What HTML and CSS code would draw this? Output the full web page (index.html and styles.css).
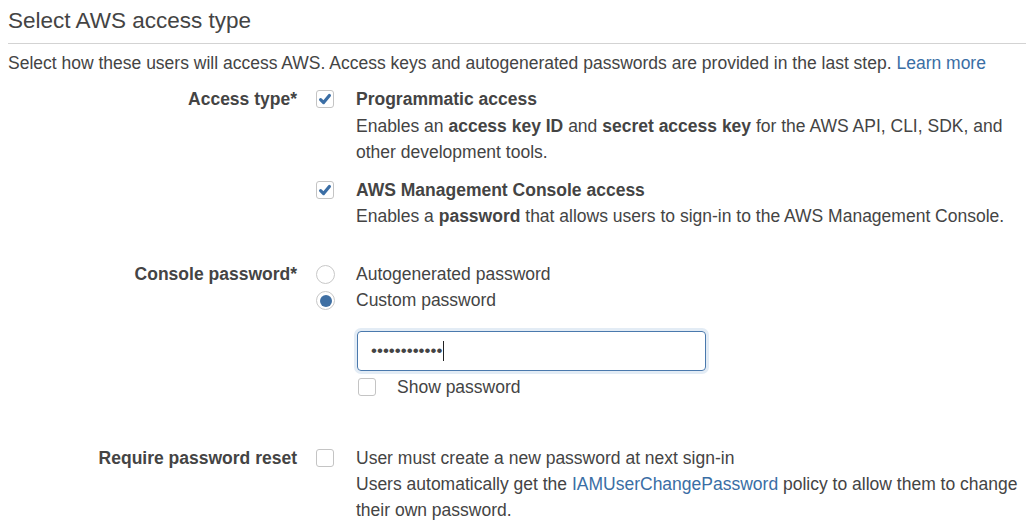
FILE: index.html
```html
<!DOCTYPE html>
<html>
<head>
<meta charset="utf-8">
<link rel="stylesheet" href="styles.css">
</head>
<body>
<div class="page">
  <h2 class="title">Select AWS access type</h2>
  <p class="desc">Select how these users will access AWS. Access keys and autogenerated passwords are provided in the last step. <a class="link" href="#">Learn more</a></p>

  <div class="row row-access">
    <div class="label">Access type*</div>
    <div class="options">
      <div class="option">
        <span class="box checked"><svg viewBox="0 0 18 18" width="18" height="18"><path d="M4.6 9.6 L7.6 12.6 L13.4 5.4" fill="none" stroke="#3b6ea5" stroke-width="3.2" stroke-linecap="round" stroke-linejoin="round"/></svg></span>
        <div class="text">
          <div class="strong">Programmatic access</div>
          <div class="lh">Enables an <b>access key ID</b> and <b>secret access key</b> for the AWS API, CLI, SDK, and<br>other development tools.</div>
        </div>
      </div>
      <div class="option option-2">
        <span class="box checked"><svg viewBox="0 0 18 18" width="18" height="18"><path d="M4.6 9.6 L7.6 12.6 L13.4 5.4" fill="none" stroke="#3b6ea5" stroke-width="3.2" stroke-linecap="round" stroke-linejoin="round"/></svg></span>
        <div class="text">
          <div class="strong">AWS Management Console access</div>
          <div>Enables a <b>password</b> that allows users to sign-in to the AWS Management Console.</div>
        </div>
      </div>
    </div>
  </div>

  <div class="row row-password">
    <div class="label">Console password*</div>
    <div class="options">
      <div class="option">
        <span class="radio"></span>
        <div class="text">Autogenerated password</div>
      </div>
      <div class="option">
        <span class="radio selected"></span>
        <div class="text">Custom password</div>
      </div>
      <div class="input-wrap">
        <div class="input"><span class="dots">••••••••••••</span><span class="caret"></span></div>
      </div>
      <div class="option show">
        <span class="box"></span>
        <div class="text">Show password</div>
      </div>
    </div>
  </div>

  <div class="row row-reset">
    <div class="label">Require password reset</div>
    <div class="options">
      <div class="option">
        <span class="box"></span>
        <div class="text">User must create a new password at next sign-in<br>Users automatically get the <a class="link" href="#">IAMUserChangePassword</a> policy to allow them to change<br>their own password.</div>
      </div>
    </div>
  </div>
</div>
</body>
</html>
```

FILE: styles.css
```css
html, body {
  margin: 0;
  padding: 0;
  background: #ffffff;
}

.page {
  font-family: "Liberation Sans", Arial, sans-serif;
  font-size: 17.5px;
  line-height: 26px;
  color: #444444;
  padding-left: 8px;
  width: 1018px;
  overflow: hidden;
  white-space: nowrap;
}

.title {
  margin: 6px 0 0 0;
  font-size: 22.5px;
  font-weight: normal;
  line-height: 30px;
  padding-bottom: 7px;
  border-bottom: 1px solid #d3d3d3;
  color: #444444;
}

.desc {
  margin: 6px 0 0 0;
}

.link {
  color: #3a6ea5;
  text-decoration: none;
}

.row {
  display: flex;
  align-items: flex-start;
}

.row-access { margin-top: 10px; }
.row-password { margin-top: 32px; }
.row-reset { margin-top: 45px; }

.label {
  width: 289px;
  padding-right: 19px;
  text-align: right;
  font-weight: bold;
  flex: none;
}

.options {
  display: flex;
  flex-direction: column;
}

.option {
  display: flex;
  align-items: flex-start;
}

.lh {
  padding-top: 1px;
}

.option-2 { margin-top: 12px; }

.strong { font-weight: bold; }

.box {
  flex: none;
  width: 16px;
  height: 16px;
  margin-top: 4px;
  margin-right: 22px;
  border: 1px solid #c4c4c4;
  border-radius: 3px;
  background: #fff;
  position: relative;
}

.box svg {
  position: absolute;
  left: -1px;
  top: -1px;
}

.radio {
  flex: none;
  width: 17px;
  height: 17px;
  margin-top: 4px;
  margin-right: 21px;
  border: 1px solid #c8c8c8;
  border-radius: 50%;
  background: #fff;
  position: relative;
}

.radio.selected::after {
  content: "";
  position: absolute;
  left: 2.5px;
  top: 2.5px;
  width: 12px;
  height: 12px;
  border-radius: 50%;
  background: #3f6fa3;
}

.input-wrap {
  margin-top: 18px;
  padding-left: 41px;
}

.input {
  height: 38px;
  border: 1px solid #4a79ad;
  border-radius: 4px;
  box-shadow: 0 0 0 3px #e3ecf5;
  display: flex;
  align-items: center;
  padding-left: 13px;
  box-sizing: content-box;
  width: 334px;
}

.dots {
  font-size: 17px;
  letter-spacing: 0;
  color: #444;
  line-height: 20px;
}

.caret {
  display: inline-block;
  width: 1px;
  height: 20px;
  background: #222;
  margin-left: 1px;
}

.show {
  margin-top: 3px;
  padding-left: 42px;
}

.show .box {
  margin-right: 21px;
}
```
